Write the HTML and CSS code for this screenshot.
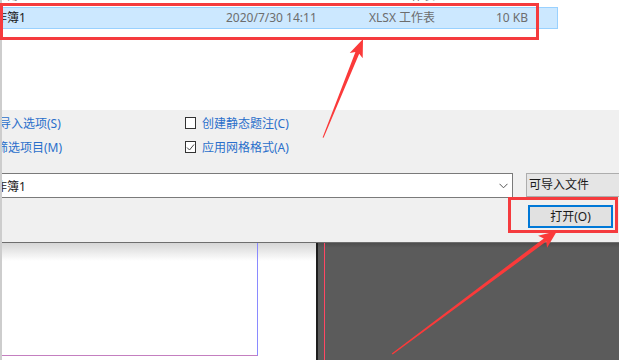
FILE: index.html
```html
<!DOCTYPE html>
<html lang="zh-CN">
<head>
<meta charset="utf-8">
<title>打开</title>
<link rel="stylesheet" href="styles.css">
</head>
<body>
<div class="page">
  <section class="files">
    <div class="row prev">
      <span class="c-name"><span class="cut">作簿</span></span>
      <span class="c-date">2020/7/30 14:10</span>
      <span class="c-type">XLSX 工作表</span>
      <span class="c-size">10 KB</span>
    </div>
    <div class="row sel">
      <span class="c-name"><span class="cut">作簿1</span></span>
      <span class="c-date">2020/7/30 14:11</span>
      <span class="c-type">XLSX 工作表</span>
      <span class="c-size">10 KB</span>
    </div>
  </section>

  <section class="opts">
    <div class="grid">
      <div class="link">导入选项(S)</div>
      <label class="check"><span class="box"></span><span>创建静态题注(C)</span></label>
      <div class="link deep">筛选项目(M)</div>
      <label class="check"><span class="box"><svg class="tick" width="9" height="9" viewBox="0 0 9 9"><polyline points="1,4.5 3.5,7 8,1.5" fill="none" stroke="#444" stroke-width="1"/></svg></span><span>应用网格格式(A)</span></label>
    </div>
    <div class="combo-row">
      <div class="combo">
        <span class="combo-text">作簿1</span>
        <svg class="chev" width="9" height="6" viewBox="0 0 9 6"><polyline points="0.5,0.8 4.5,4.8 8.5,0.8" fill="none" stroke="#555" stroke-width="1"/></svg>
      </div>
      <div class="filetype">可导入文件</div>
    </div>
    <div class="btn-row">
      <button class="btn">打开(O)</button>
    </div>
  </section>

  <section class="preview">
    <div class="left"><div class="inner"></div></div>
    <div class="divider"></div>
    <div class="dark"><div class="redline"></div></div>
  </section>
</div>

<div class="annot a1"></div>
<div class="annot a2"></div>
<svg class="arrows" width="619" height="360" viewBox="0 0 619 360">
  <polygon fill="#fb3a3a" points="322.6,137.5 355.4,52.1 349.7,53.1 363,39 362.7,58.3 359.2,53.7 323.6,137.8"/>
  <polygon fill="#fb3a3a" points="391.8,353.6 543.8,238.4 538.1,235.8 557,231 547.1,247.8 546.2,241.6 392.6,354.6"/>
</svg>
</body>
</html>
```

FILE: styles.css
```css
html, body {
  margin: 0;
  padding: 0;
}
body {
  width: 619px;
  height: 360px;
  overflow: hidden;
  position: relative;
  background: #ffffff;
  font-family: "Noto Sans", "Noto Sans CJK SC", sans-serif;
  font-size: 12px;
  color: #1a1a1a;
}
.page {
  height: 360px;
  box-sizing: border-box;
  border-left: 2px solid #cdcdcd;
}

/* file list */
.files {
  height: 110px;
  background: #ffffff;
  overflow: hidden;
}
.row {
  display: flex;
  align-items: center;
  height: 22px;
  box-sizing: border-box;
  width: 556px;
  line-height: 20px;
  white-space: nowrap;
}
.prev {
  margin-top: -15px;
  color: #8a8a8a;
  border: 1px solid transparent;
}
.sel {
  background: #cce8ff;
  border: 1px solid #99d1ff;
}
.c-name {
  width: 223px;
  overflow: hidden;
  flex: none;
}
.cut {
  display: inline-block;
  margin-left: -8px;
}
.c-date {
  width: 143px;
  flex: none;
  color: #6d6d6d;
}
.c-type {
  width: 100px;
  flex: none;
  color: #6d6d6d;
}
.c-size {
  width: 59px;
  flex: none;
  text-align: right;
  color: #6d6d6d;
}

/* options */
.opts {
  height: 132px;
  box-sizing: border-box;
  background: #f0f0f0;
  padding-top: 2px;
}
.grid {
  display: grid;
  grid-template-columns: 183px auto;
  grid-auto-rows: 22px;
  row-gap: 2px;
  align-items: center;
  color: #2a6fcb;
}
.link {
  overflow: hidden;
  white-space: nowrap;
  text-indent: -3px;
}
.link.deep {
  text-indent: -6px;
}
.check {
  display: flex;
  align-items: center;
  gap: 6px;
}
.box {
  width: 11px;
  height: 12px;
  box-sizing: border-box;
  border: 1px solid #333333;
  background: #ffffff;
  display: flex;
  align-items: center;
  justify-content: center;
}
.tick {
  display: block;
}

.combo-row {
  display: flex;
  margin-top: 15px;
  height: 25px;
  gap: 13px;
}
.combo {
  width: 511px;
  flex: none;
  box-sizing: border-box;
  background: #ffffff;
  border: 1px solid #7a7a7a;
  border-left: none;
  display: flex;
  align-items: center;
  justify-content: space-between;
  padding-right: 4px;
  overflow: hidden;
}
.combo-text {
  margin-left: -7px;
  white-space: nowrap;
}
.chev {
  display: block;
}
.filetype {
  width: 110px;
  flex: none;
  box-sizing: border-box;
  height: 24px;
  background: #e5e5e5;
  border: 1px solid #adadad;
  border-right: none;
  padding-left: 2px;
  line-height: 22px;
  white-space: nowrap;
}
.btn-row {
  display: flex;
  justify-content: flex-end;
  margin-top: 7px;
  padding-right: 6px;
}
.btn {
  width: 85px;
  height: 23px;
  box-sizing: border-box;
  border: 2px solid #0078d7;
  background: #e1e1e1;
  font: inherit;
  color: #1a1a1a;
  line-height: 17px;
  padding: 0;
  margin: 0;
}

/* preview */
.preview {
  display: flex;
  height: 118px;
  box-sizing: border-box;
  border-top: 1px solid #6e6e6e;
}
.left {
  width: 314px;
  flex: none;
  background: linear-gradient(#d6d6d6, #ffffff 18px);
}
.inner {
  width: 256px;
  height: 113px;
  box-sizing: border-box;
  border-right: 1px solid #8a8aff;
  border-bottom: 1px solid #c47fc0;
}
.divider {
  width: 2px;
  flex: none;
  background: #1e1e1e;
}
.dark {
  flex: 1;
  display: flex;
  background: linear-gradient(#4e4e4e, #5b5b5b 5px);
}
.redline {
  width: 1px;
  margin-left: 6px;
  background: #ff4763;
}

/* annotations */
.annot {
  position: absolute;
  box-sizing: border-box;
  border: 3px solid #f53b3e;
}
.a1 {
  left: 0;
  top: 3px;
  width: 539px;
  height: 37px;
}
.a2 {
  left: 508px;
  top: 197px;
  width: 110px;
  height: 36px;
}
.arrows {
  position: absolute;
  left: 0;
  top: 0;
  pointer-events: none;
}
```
